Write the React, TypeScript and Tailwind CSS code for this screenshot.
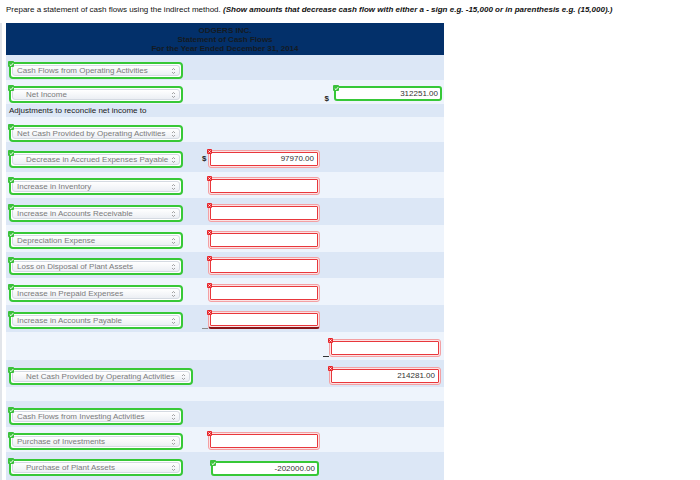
import React from 'react';

const Check = () => (
  <span className="absolute -left-[3px] -top-[3px] z-10 flex h-[6px] w-[6px] items-center justify-center rounded-[1px] bg-[#3cc13c]">
    <svg width="5" height="5" viewBox="0 0 5 5">
      <path d="M0.8 2.6 L2 3.7 L4.2 1.1" stroke="#fff" strokeWidth="1" fill="none" />
    </svg>
  </span>
);

const Cross = () => (
  <span className="absolute -left-[2px] -top-[2px] z-10 flex h-[5px] w-[5px] items-center justify-center rounded-[1px] bg-[#e8262b]">
    <svg width="5" height="5" viewBox="0 0 5 5">
      <path d="M1.4 1.4 L3.6 3.6 M3.6 1.4 L1.4 3.6" stroke="#fff" strokeWidth="0.8" />
    </svg>
  </span>
);

const Chevron = () => (
  <svg width="5" height="8" viewBox="0 0 5 8" className="shrink-0">
    <path d="M1 3 L2.5 1.5 L4 3 M1 5 L2.5 6.5 L4 5" stroke="#8a8a8a" strokeWidth="0.8" fill="none" />
  </svg>
);

const Select = ({ label, indent = false, wide = false }: { label: string; indent?: boolean; wide?: boolean }) => (
  <div
    className={`relative h-[17px] rounded-[4px] border-2 border-[#37c837] bg-white p-px ${
      wide ? 'w-[184px]' : 'w-[174px]'
    }`}
  >
    <Check />
    <div
      className={`flex h-full items-center justify-between rounded-[3px] border border-[#d5dae2] bg-linear-to-b from-white to-[#eceff4] pr-[3px] text-[8px] text-[#7b7b7b] ${
        indent ? 'pl-[13px]' : 'pl-[4px]'
      }`}
    >
      <span className="leading-none">{label}</span>
      <Chevron />
    </div>
  </div>
);

const BadInput = ({ value = '', total = false }: { value?: string; total?: boolean }) => (
  <div
    className={`relative h-[18px] w-[112px] rounded-[3px] border border-[#f3a0a3] bg-[#fce3e4] p-px ${
      total ? 'border-b-2 border-b-[#8a1418]' : ''
    }`}
  >
    <Cross />
    <div className="flex h-full items-center justify-end rounded-[1px] border border-[#e8373c] bg-white pr-[3px] text-[8px] leading-none text-[#333]">
      {value}
    </div>
  </div>
);

const GoodInput = ({ value, className }: { value: string; className: string }) => (
  <div
    className={`relative flex h-[15px] w-[108px] items-center justify-end rounded-[3px] border-2 border-[#37c837] bg-white pr-[2px] text-[8px] leading-none text-[#333] ${className}`}
  >
    <Check />
    {value}
  </div>
);

const Dollar = () => <span className="pl-[2px] text-[8px] font-bold leading-none text-[#222]">$</span>;

const Row = ({
  h,
  pb,
  dark,
  left,
  mid,
  right,
}: {
  h: string;
  pb: string;
  dark: boolean;
  left?: React.ReactNode;
  mid?: React.ReactNode;
  right?: React.ReactNode;
}) => (
  <div className={`flex items-end ${h} ${pb} ${dark ? 'bg-[#dce7f6]' : 'bg-[#eef4fc]'}`}>
    <div className="w-[194px] pl-[3px]">{left}</div>
    <div className="flex w-[123px] items-end">{mid}</div>
    <div className="flex w-[121px] items-end">{right}</div>
  </div>
);

const App = () => {
  return (
    <div className="relative h-[480px] w-[700px] overflow-hidden bg-white font-[family-name:'Liberation_Sans',Arial,sans-serif] text-[#111]">
      <p className="pl-[6px] pt-[5px] text-[8px] leading-[10px]">
        Prepare a statement of cash flows using the indirect method.{' '}
        <span className="font-bold italic">
          (Show amounts that decrease cash flow with either a - sign e.g. -15,000 or in parenthesis e.g. (15,000).)
        </span>
      </p>

      <div className="mt-[8px] border-l-2 border-[#e2e5ea]">
        <div className="ml-[4px] w-[438px]">
          {/* Header */}
          <div className="flex h-[32px] flex-col items-center justify-center bg-[#03306a] text-[8px] font-bold leading-[9px] text-[#141a22]">
            <span>ODGERS INC.</span>
            <span>Statement of Cash Flows</span>
            <span>For the Year Ended December 31, 2014</span>
          </div>

          <Row h="h-[25px]" pb="pb-px" dark left={<Select label="Cash Flows from Operating Activities" />} />
          <Row
            h="h-[24px]"
            pb="pb-px"
            dark={false}
            left={<Select label="Net Income" indent />}
            right={
              <>
                <div className="flex w-[6px] justify-end">
                  <Dollar />
                </div>
                <GoodInput value="312251.00" className="mb-[2px] ml-[5px]" />
              </>
            }
          />
          <div className="flex h-[13px] items-center bg-[#dce7f6] pl-[3px] text-[8px] leading-none text-[#1a1a1a]">
            Adjustments to reconcile net income to
          </div>
          <Row h="h-[25px]" pb="pb-0" dark={false} left={<Select label="Net Cash Provided by Operating Activities" />} />
          <Row
            h="h-[30px]"
            pb="pb-[4px]"
            dark
            left={<Select label="Decrease in Accrued Expenses Payable" indent />}
            mid={
              <>
                <div className="w-[8px]">
                  <Dollar />
                </div>
                <BadInput value="97970.00" />
              </>
            }
          />
          <Row
            h="h-[26px]"
            pb="pb-[3px]"
            dark={false}
            left={<Select label="Increase in Inventory" />}
            mid={
              <>
                <div className="w-[8px]" />
                <BadInput />
              </>
            }
          />
          <Row
            h="h-[27px]"
            pb="pb-[3px]"
            dark
            left={<Select label="Increase in Accounts Receivable" />}
            mid={
              <>
                <div className="w-[8px]" />
                <BadInput />
              </>
            }
          />
          <Row
            h="h-[27px]"
            pb="pb-[3px]"
            dark={false}
            left={<Select label="Depreciation Expense" />}
            mid={
              <>
                <div className="w-[8px]" />
                <BadInput />
              </>
            }
          />
          <Row
            h="h-[26px]"
            pb="pb-[3px]"
            dark
            left={<Select label="Loss on Disposal of Plant Assets" />}
            mid={
              <>
                <div className="w-[8px]" />
                <BadInput />
              </>
            }
          />
          <Row
            h="h-[27px]"
            pb="pb-[3px]"
            dark={false}
            left={<Select label="Increase in Prepaid Expenses" />}
            mid={
              <>
                <div className="w-[8px]" />
                <BadInput />
              </>
            }
          />
          <Row
            h="h-[27px]"
            pb="pb-[3px]"
            dark
            left={<Select label="Increase in Accounts Payable" />}
            mid={
              <>
                <div className="ml-[2px] h-px w-[6px] bg-[#8d8d8d]" />
                <BadInput total />
              </>
            }
          />
          <Row
            h="h-[28px]"
            pb="pb-[3px]"
            dark={false}
            right={
              <>
                <div className="h-px w-[6px] bg-[#333]" />
                <BadInput />
              </>
            }
          />
          <Row
            h="h-[27px]"
            pb="pb-[2px]"
            dark
            left={<Select label="Net Cash Provided by Operating Activities" indent wide />}
            right={
              <>
                <div className="w-[6px]" />
                <BadInput value="214281.00" />
              </>
            }
          />
          <div className="h-[14px] bg-[#eef4fc]" />
          <Row h="h-[26px]" pb="pb-[2px]" dark left={<Select label="Cash Flows from Investing Activities" />} />
          <Row
            h="h-[25px]"
            pb="pb-[2px]"
            dark={false}
            left={<Select label="Purchase of Investments" />}
            mid={
              <>
                <div className="w-[8px]" />
                <BadInput />
              </>
            }
          />
          <Row
            h="h-[28px]"
            pb="pb-[4px]"
            dark
            left={<Select label="Purchase of Plant Assets" indent />}
            mid={
              <>
                <div className="w-[8px]" />
                <GoodInput value="-202000.00" className="ml-[3px]" />
              </>
            }
          />
        </div>
      </div>
    </div>
  );
};

export default App;
